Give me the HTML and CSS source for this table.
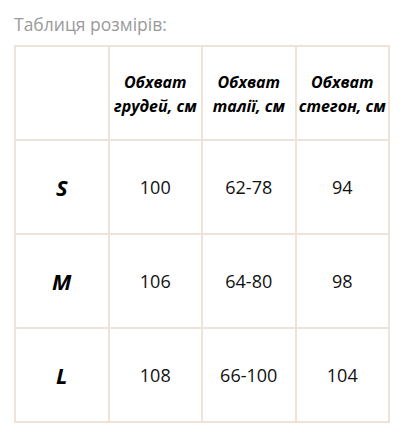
FILE: index.html
```html
<!DOCTYPE html>
<html lang="uk">
<head>
<meta charset="utf-8">
<link rel="stylesheet" href="styles.css">
</head>
<body>
<div class="page">
  <div class="title">Таблиця розмірів:</div>
  <div class="table">
    <div class="cell"></div>
    <div class="cell head">Обхват<br>грудей, см</div>
    <div class="cell head">Обхват<br>талії, см</div>
    <div class="cell head">Обхват<br>стегон, см</div>

    <div class="cell size">S</div>
    <div class="cell num">100</div>
    <div class="cell num">62-78</div>
    <div class="cell num">94</div>

    <div class="cell size">M</div>
    <div class="cell num">106</div>
    <div class="cell num">64-80</div>
    <div class="cell num">98</div>

    <div class="cell size">L</div>
    <div class="cell num">108</div>
    <div class="cell num">66-100</div>
    <div class="cell num">104</div>
  </div>
</div>
</body>
</html>
```

FILE: styles.css
```css
html, body {
  margin: 0;
  padding: 0;
  background: #ffffff;
}
.page {
  padding: 12px 14px 0 14px;
  font-family: "Open Sans", "Noto Sans", sans-serif;
  color: #111111;
}
.title {
  font-size: 17.5px;
  line-height: 24px;
  color: #9a9a9a;
  margin-bottom: 9px;
}
.table {
  width: 376px;
  box-sizing: border-box;
  display: grid;
  grid-template-columns: repeat(4, 1fr);
  grid-auto-rows: 94px;
  border-top: 2px solid #efe2d8;
  border-left: 2px solid #efe2d8;
}
.cell {
  border-right: 2px solid #efe2d8;
  border-bottom: 2px solid #efe2d8;
  display: flex;
  align-items: center;
  justify-content: center;
  text-align: center;
}
.head {
  font-weight: 700;
  font-style: italic;
  font-size: 16px;
  line-height: 24px;
  color: #000000;
  padding-top: 2px;
}
.size {
  font-weight: 700;
  font-style: italic;
  font-size: 22px;
  color: #000000;
}
.num {
  font-size: 18px;
  color: #111111;
}
```
